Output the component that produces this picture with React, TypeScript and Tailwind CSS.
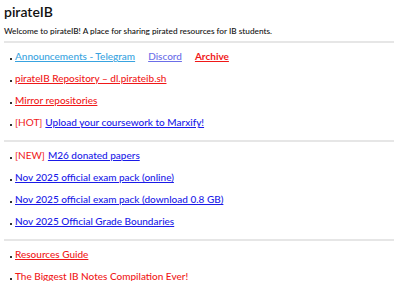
const font = { fontFamily: '"Lato", "Liberation Sans", sans-serif' }

type Item = { pre?: string; label: string; color: string; bold?: boolean; extra?: { label: string; color: string; bold?: boolean }[] }

const groups: Item[][] = [
  [
    {
      label: "Announcements - Telegram",
      color: "text-[#38a3e0]",
      extra: [
        { label: "Discord", color: "text-[#6b6ee8]" },
        { label: "Archive", color: "text-[#f01818]", bold: true },
      ],
    },
    { label: "pirateIB Repository – dl.pirateib.sh", color: "text-[#f01818]" },
    { label: "Mirror repositories", color: "text-[#f01818]" },
    { pre: "[HOT]", label: "Upload your coursework to Marxify!", color: "text-[#1a1ae8]" },
  ],
  [
    { pre: "[NEW]", label: "M26 donated papers", color: "text-[#1a1ae8]" },
    { label: "Nov 2025 official exam pack (online)", color: "text-[#1a1ae8]" },
    { label: "Nov 2025 official exam pack (download 0.8 GB)", color: "text-[#1a1ae8]" },
    { label: "Nov 2025 Official Grade Boundaries", color: "text-[#1a1ae8]" },
  ],
  [
    { label: "Resources Guide", color: "text-[#f01818]" },
    { label: "The Biggest IB Notes Compilation Ever!", color: "text-[#f01818]" },
  ],
]

const Row = ({ item }: { item: Item }) => (
  <li className="flex items-baseline h-[22px] text-[10px] font-medium">
    <span className="w-[2px] h-[2px] bg-[#333] mr-[3px] shrink-0" />
    {item.pre && <span className="text-[#f01818] font-normal mr-[3px]">{item.pre}</span>}
    <a href="#" className={`${item.color} underline ${item.bold ? "font-bold" : ""}`}>{item.label}</a>
    {item.extra?.map(e => (
      <a key={e.label} href="#" className={`${e.color} underline ml-[13px] ${e.bold ? "font-bold" : ""}`}>{e.label}</a>
    ))}
  </li>
)

export default function App() {
  return (
    <div className="w-[400px] h-[281px] overflow-hidden bg-white text-[#111] px-[4px]" style={font}>
      <h1 className="text-[14px] font-semibold pt-[4px] leading-[16px]">pirateIB</h1>
      <p className="text-[8.25px] font-medium mt-[6px] leading-[10px]">Welcome to pirateIB! A place for sharing pirated resources for IB students.</p>
      {groups.map((g, i) => (
        <div key={i}>
          <hr className={`border-0 h-[2px] bg-[#e6e6e6] mr-[2px] ${i === 0 ? "mt-[5px]" : "mt-[3px]"}`} />
          <ul className="pl-[6px] pt-[6px]">
            {g.map(item => <Row key={item.label} item={item} />)}
          </ul>
        </div>
      ))}
    </div>
  )
}
